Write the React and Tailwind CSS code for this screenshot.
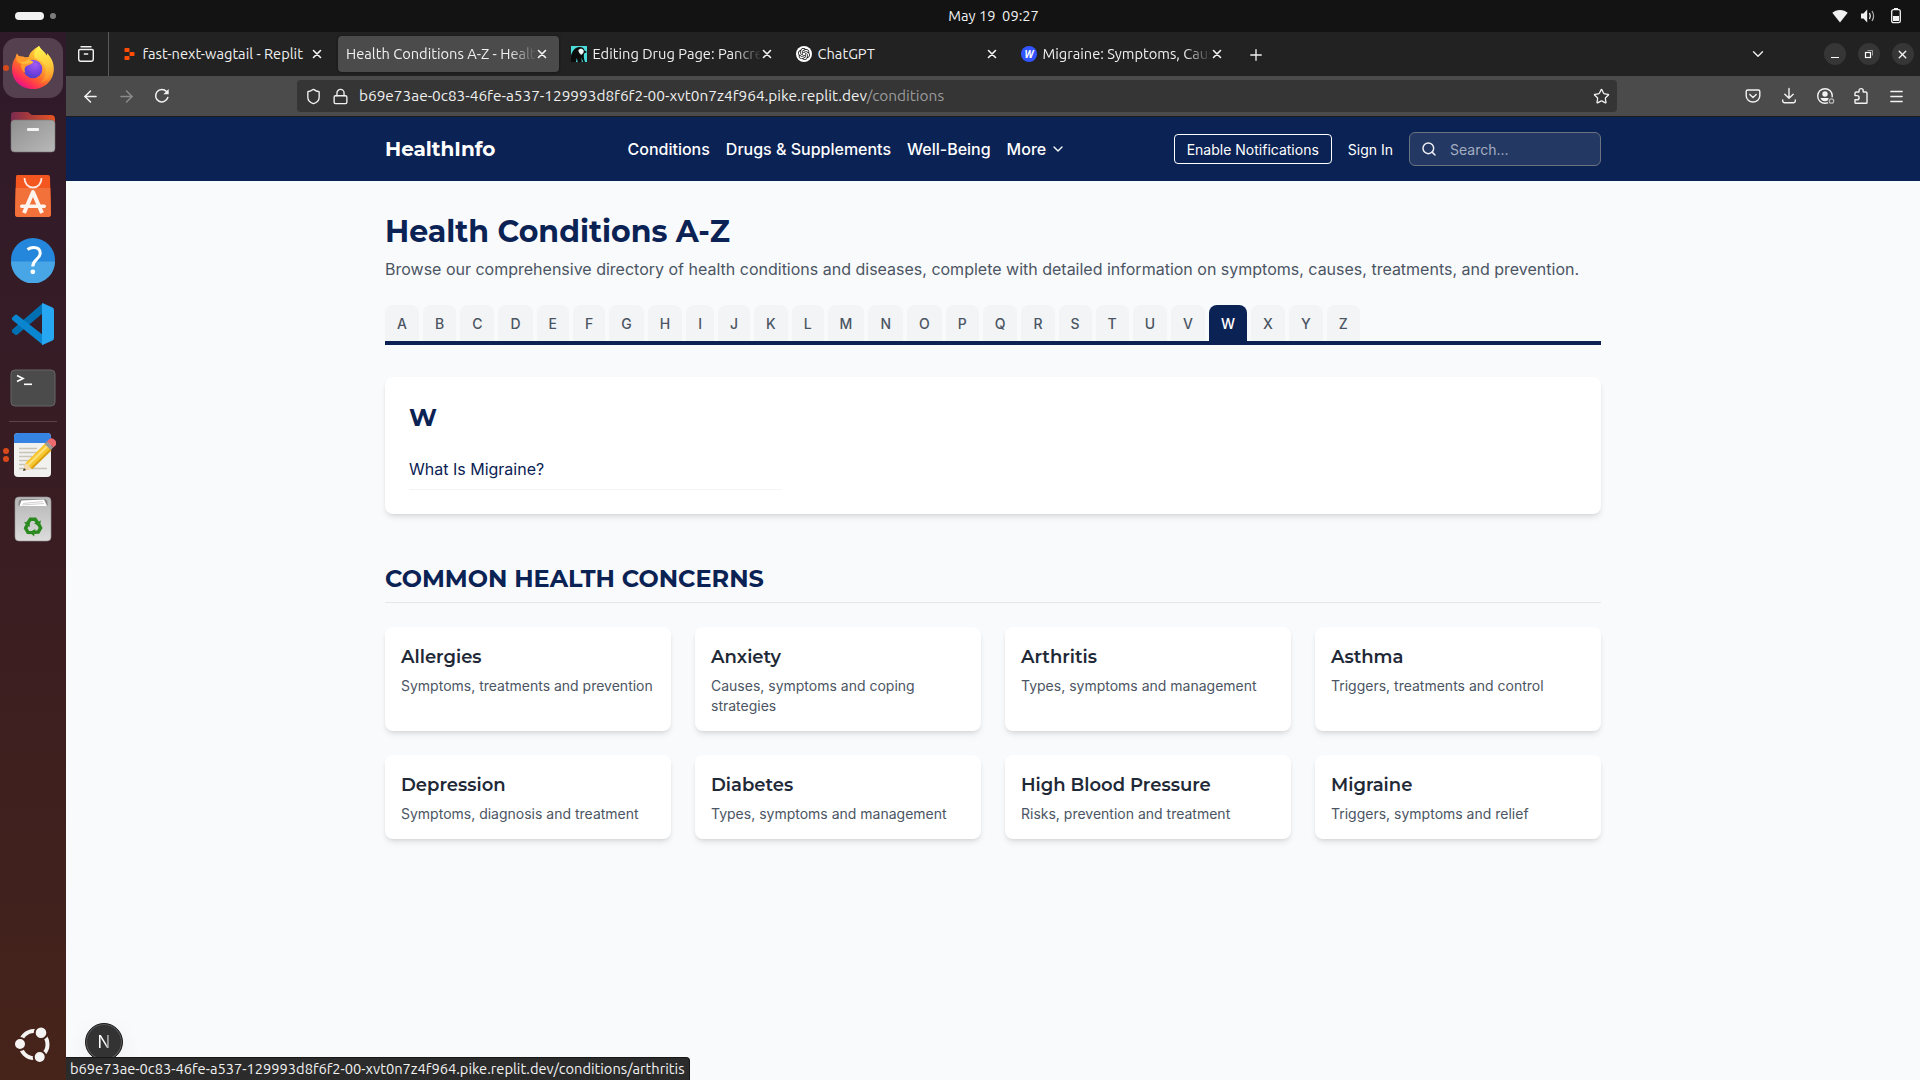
import {
  ArrowLeft,
  ArrowRight,
  Lock,
  Menu,
  Plus,
  Search,
  Shield,
  Star,
  X,
  ChevronDown,
} from "lucide-react";
import { SiOpenai } from "react-icons/si";

const UI = "font-[Ubuntu,'Noto_Sans',sans-serif]";
const HEADING = "font-[Montserrat,Inter,sans-serif]";

/* ---------- Dock icons ---------- */

function FirefoxIcon() {
  return (
    <svg width="46" height="46" viewBox="0 0 46 46" className="-mt-[3px]">
      <defs>
        <linearGradient id="ffBody" x1="0.85" y1="0.1" x2="0.25" y2="0.95">
          <stop offset="0" stopColor="#ffe64d" />
          <stop offset="0.35" stopColor="#ffb02e" />
          <stop offset="0.62" stopColor="#ff6a2b" />
          <stop offset="0.85" stopColor="#ff2f55" />
          <stop offset="1" stopColor="#e61587" />
        </linearGradient>
        <linearGradient id="ffTail" x1="0.5" y1="0" x2="0.6" y2="1">
          <stop offset="0" stopColor="#fff44f" />
          <stop offset="0.55" stopColor="#ffc83a" />
          <stop offset="1" stopColor="#ff8a2a" stopOpacity="0.6" />
        </linearGradient>
        <radialGradient id="ffGlobe" cx="0.6" cy="0.25" r="0.8">
          <stop offset="0" stopColor="#a35bf2" />
          <stop offset="0.6" stopColor="#7340e0" />
          <stop offset="1" stopColor="#4a3fc4" />
        </radialGradient>
      </defs>
      <path
        d="M29 2c2 4 6 6 8 10 .3-.9.2-1.800 0-2.700C41.500 14 44 19 43.800 25 43.500 37 34.500 45 23 45 11 45 2 36.500 2 25c0-5 1.400-8.500 3.500-11.500.1-1.300.6-2.800 1.500-4 .3 1.200 1 2.300 2 3 2.500-.5 4.500 0 6.500 1 1-.4 2.200-.6 3.200-.5C20 8 24 5 29 2z"
        fill="url(#ffBody)"
      />
      <path
        d="M29 2c2 4 6 6 8 10 .3-.9.2-1.800 0-2.700C42 15 43.500 20 42.500 26c-1.200 7.500-6 12-12.500 13 6-5 8-13 3.500-19-2-3-5.500-4-8.500-6-2-3-.5-8 4-12z"
        fill="url(#ffTail)"
      />
      <circle cx="23" cy="25" r="9.300" fill="url(#ffGlobe)" />
      <path d="M7 9.500c.5 2 3 3.200 5.500 4 3-.6 6 .5 7.500 3 1.500 1 3.500.8 3 2-1 2-4.500 2.200-6.500 3.500-2 1.500-2.500 4-1.200 7-3.500-2.500-5-6-4.300-9.500C7 19 5 15 7 9.500z" fill="#ff9a2e" />
      <path d="M10 18.500c2.800 1.800 6 1.500 9 .8 2.200-.5 3.800-.3 4-1 .4-1.300-3-1.500-4.500-3-1.700 1.700-5 3-8.500 3.200z" fill="#ffbd3f" />
    </svg>
  );
}

function FilesIcon() {
  return (
    <svg width="46" height="42" viewBox="0 0 46 42">
      <defs>
        <linearGradient id="flBack" x1="0" y1="0" x2="1" y2="0">
          <stop offset="0" stopColor="#7b2a50" />
          <stop offset="1" stopColor="#e95420" />
        </linearGradient>
        <linearGradient id="flFront" x1="0" y1="0" x2="1" y2="1">
          <stop offset="0" stopColor="#8f8f8f" />
          <stop offset="1" stopColor="#b9b9b9" />
        </linearGradient>
      </defs>
      <path d="M1 16V4q0-3 3-3h13q1.500 0 2.500 1.300T22 4h19q4 0 4 4v9z" fill="url(#flBack)" />
      <rect x="1" y="9" width="44" height="32" rx="3.500" fill="url(#flFront)" stroke="#777" strokeWidth="0.600" />
      <rect x="17" y="17" width="12" height="3" rx="1" fill="#f4f4f4" />
    </svg>
  );
}

function StoreIcon() {
  return (
    <svg width="38" height="44" viewBox="0 0 38 44">
      <path d="M3 1h31q2 0 2 2l1 37q0 3-3 3H4q-3 0-3-3L2 3q0-2 1-2z" fill="#f4561f" />
      <path d="M1.700 14h34.600l.7 26q0 3-3 3H4q-3 0-3-3z" fill="#f2703a" />
      <path d="M10.500 4c0 5.500 3.500 9.500 8.500 9.500s8.500-4 8.500-9.500" fill="none" stroke="#ffe8df" strokeWidth="1.800" />
      <path d="M10 39l9-21 9 21" fill="none" stroke="#fff3ee" strokeWidth="4" strokeLinejoin="round" />
      <rect x="6" y="30.500" width="26" height="3.500" rx="1.700" fill="#fff3ee" />
    </svg>
  );
}

function HelpIcon() {
  return (
    <svg width="46" height="46" viewBox="0 0 46 46">
      <circle cx="23" cy="23" r="22" fill="#2487db" />
      <path d="M1 24.500h44A22 22 0 0 1 1 24.500z" fill="#48a6e6" />
      <path d="M17.500 12.500c2-1.400 4-2 6-2 4 0 6.700 2 6.700 5.600 0 6.400-7.500 6.400-7.500 13.400" fill="none" stroke="#fff" strokeWidth="3" />
      <circle cx="22.800" cy="34.800" r="2.400" fill="#fff" />
    </svg>
  );
}

function CodeIcon() {
  return (
    <svg width="44" height="44" viewBox="0 0 44 44">
      <path d="M32 1v10L6.500 32.500q-1.500 1-2.800 0L1.300 30.200q-1-1.200 0-2.600z" fill="#0070b3" />
      <path d="M1.300 15.500L3.700 13.200q1.300-1.200 2.800 0L32 33v10L1.300 18q-1-1.200 0-2.500z" fill="#0a86d1" />
      <path d="M31.500 1L41.500 5.500q1.500.8 1.500 2.500v28q0 1.700-1.500 2.500L31.500 43q-1 0-.5-1.500V2.500q0-1.500.5-1.500z" fill="#27a6f2" />
    </svg>
  );
}

function TerminalIcon() {
  return (
    <svg width="46" height="38" viewBox="0 0 46 38">
      <rect x="1" y="1" width="44" height="36" rx="4" fill="#4b4b4b" stroke="#666" />
      <path d="M7 6.500l6 3-6 3" fill="none" stroke="#fff" strokeWidth="1.700" />
      <rect x="14" y="14.500" width="8" height="1.600" fill="#fff" />
    </svg>
  );
}

function NotesIcon() {
  return (
    <svg width="46" height="48" viewBox="0 0 46 48">
      <rect x="4" y="2" width="37" height="44" rx="4" fill="#f1f1f0" />
      <path d="M4 12V6q0-4 4-4h29q4 0 4 4v6z" fill="#3584e4" />
      <path d="M9 17.500h18M9 21.500h18M9 25.500h13M9 29.500h12M9 33.500h9M9 37.500h28" stroke="#c9c4b4" strokeWidth="1.700" />
      <path d="M13 40l2.500-8L35 12.500l6 6L21.500 37.500z" fill="#f6c62f" />
      <path d="M17.500 34.500L37.500 15" stroke="#fbe07c" strokeWidth="2.200" />
      <path d="M21.500 37.500L41 18.500" stroke="#dba012" strokeWidth="2" />
      <path d="M13 40l2.500-8 6 5.500z" fill="#f3d9b0" />
      <path d="M13 40l.9-3 2.300 2z" fill="#3d3846" />
      <path d="M34.500 12.800l2.500-2.500 6.300 6.200-2.600 2.500z" fill="#9a9996" />
      <path d="M37 10.300l1.800-1.800q3-2.500 6 .5t.5 5.700l-2 1.800z" fill="#ed6a6f" />
    </svg>
  );
}

function RecycleArrow() {
  return (
    <>
      <path d="M-5.500 -2.800L-2.600 -7.300H2.200L4.400 -4" />
      <path d="M1 -3.300l7-2.600-1.600 6z" fill="#2a8a1f" stroke="none" />
    </>
  );
}

function TrashIcon() {
  return (
    <svg width="38" height="46" viewBox="0 0 38 46">
      <defs>
        <linearGradient id="trBody" x1="0" y1="0" x2="0" y2="1">
          <stop offset="0" stopColor="#b5b5b5" />
          <stop offset="1" stopColor="#dcdcdc" />
        </linearGradient>
      </defs>
      <rect x="1" y="1" width="36" height="44" rx="4" fill="url(#trBody)" stroke="#999" strokeWidth="0.600" />
      <path d="M4.500 10V7q0-4 4-4h21q4 0 4 4v3z" fill="#8a8a8a" />
      <path d="M5.500 10l2-5.500L30 3.500l3 6.500z" fill="#fff" />
      <path d="M9 7.500l20-2M8 9l22-1.500" stroke="#bbb" strokeWidth="0.700" />
      <g transform="translate(19 30.500)" fill="none" stroke="#2a8a1f" strokeWidth="3.400">
        <RecycleArrow />
        <g transform="rotate(120)">
          <RecycleArrow />
        </g>
        <g transform="rotate(240)">
          <RecycleArrow />
        </g>
      </g>
    </svg>
  );
}

function UbuntuIcon() {
  return (
    <svg width="38" height="38" viewBox="0 0 38 38">
      <circle cx="20" cy="19.500" r="13.500" fill="none" stroke="#f6f4f3" strokeWidth="4" />
      <g fill="#f6f4f3" stroke="#46231a" strokeWidth="2">
        <circle cx="6" cy="19" r="6" />
        <circle cx="27" cy="7.800" r="6.300" />
        <circle cx="25.700" cy="32" r="6" />
      </g>
    </svg>
  );
}

function DockItem({ children, dots = 0, active = false }) {
  return (
    <div className="relative flex h-16 w-full shrink-0 items-center justify-center">
      {active && <div className="absolute top-0.5 left-[3px] size-[60px] rounded-[14px] bg-[#54404f]" />}
      {dots > 0 && (
        <div className="absolute top-0 left-[3px] flex h-full flex-col items-center justify-center gap-[2px]">
          {Array.from({ length: dots }, (_, i) => (
            <span key={i} className="size-[6px] rounded-full bg-[#d84a1b]" />
          ))}
        </div>
      )}
      <div className="relative">{children}</div>
    </div>
  );
}

function Dock() {
  return (
    <aside className="flex w-[66px] shrink-0 flex-col items-center bg-linear-to-b from-[#2f1a2a] via-[#3a1d22] to-[#46241a] pt-1">
      <DockItem active dots={1}><FirefoxIcon /></DockItem>
      <DockItem><FilesIcon /></DockItem>
      <DockItem><StoreIcon /></DockItem>
      <DockItem><HelpIcon /></DockItem>
      <DockItem><CodeIcon /></DockItem>
      <DockItem><TerminalIcon /></DockItem>
      <div className="flex h-[3px] shrink-0 items-center">
        <div className="h-px w-12 bg-[#5b4448]" />
      </div>
      <DockItem dots={2}><NotesIcon /></DockItem>
      <DockItem><TrashIcon /></DockItem>
      <div className="mt-auto mb-1">
        <DockItem><UbuntuIcon /></DockItem>
      </div>
    </aside>
  );
}

/* ---------- System bar ---------- */

function SystemBar() {
  return (
    <div className={`grid h-8 shrink-0 grid-cols-3 items-center bg-[#131313] text-[#f0f0f0] ${UI}`}>
      <div className="flex items-center gap-1.5 pl-[15px]">
        <span className="h-2 w-[29px] rounded-full bg-[#f2f2f2]" />
        <span className="size-[6px] rounded-full bg-[#7d7d7d]" />
      </div>
      <div className="-mt-px pl-[67px] text-center text-[14.67px] leading-5 whitespace-pre">May 19  09:27</div>
      <div className="flex items-center justify-end gap-3 pr-4">
        <svg width="16" height="16" viewBox="0 0 16 16">
          <path d="M.3 4.800C2.200 2.900 5 1.900 8 1.900s5.800 1 7.700 2.900L8 14.500z" fill="#f2f2f2" />
        </svg>
        <svg width="16" height="16" viewBox="0 0 16 16" fill="none">
          <path d="M1 5.500h2.500L7.200 1.500v13L3.500 10.500H1z" fill="#f2f2f2" />
          <path d="M9.500 5q1.600 3 0 6" stroke="#f2f2f2" strokeWidth="1.300" />
          <path d="M12 3q3.200 5 0 10" stroke="#a9a9a9" strokeWidth="1.300" />
        </svg>
        <svg width="16" height="16" viewBox="0 0 16 16" fill="none">
          <rect x="3.700" y="1.700" width="8.600" height="13" rx="1.800" stroke="#f2f2f2" strokeWidth="1.300" />
          <rect x="6" y="0" width="4" height="2" fill="#f2f2f2" />
          <rect x="5" y="8" width="6" height="5" fill="#f2f2f2" />
        </svg>
      </div>
    </div>
  );
}

/* ---------- Browser chrome ---------- */

function ReplitIcon() {
  return (
    <svg width="16" height="16" viewBox="0 0 16 16" fill="#ff4d05">
      <rect x="3.500" y="2" width="5" height="4" rx="0.800" />
      <rect x="8.500" y="6" width="5" height="4" rx="0.800" />
      <rect x="3.500" y="10" width="5" height="4" rx="0.800" />
    </svg>
  );
}

function WagtailIcon() {
  return (
    <svg width="16" height="16" viewBox="0 0 16 16">
      <rect width="16" height="16" fill="#4bdcdb" />
      <path d="M0 16V9.500C1.500 5 4 1 8.500 1c3 0 4.700 1.500 5 3.500L16 6l-3 1.500C12.500 11 13 13 14 16z" fill="#0b0b0b" />
      <path d="M7.300 4.500C8 2.300 11.500 2 12.600 4.300c.6 2.200-.6 3.700-2.600 4.700-.5-1.500-2.400-2-2.700-4.500z" fill="#eef7f7" />
      <path d="M5 16l.8-4 .9 4zM10.800 16l-.4-4.500 1.800 4.500z" fill="#4bdcdb" />
    </svg>
  );
}

function ChatIcon() {
  return (
    <span className="flex size-4 items-center justify-center rounded-full bg-white">
      <SiOpenai size={12} color="#111" />
    </span>
  );
}

function WIcon() {
  return (
    <span className="flex size-4 items-center justify-center rounded-full bg-[#3355ff] font-['Noto_Sans',sans-serif] text-[10px] leading-none font-bold text-white italic">
      W
    </span>
  );
}

const TABS = [
  { title: "fast-next-wagtail - Replit", icon: <ReplitIcon /> },
  { title: "Health Conditions A-Z - Healt", active: true, fade: true },
  { title: "Editing Drug Page: Pancre", icon: <WagtailIcon />, fade: true },
  { title: "ChatGPT", icon: <ChatIcon /> },
  { title: "Migraine: Symptoms, Caus", icon: <WIcon />, fade: true },
];

function Tab({ title, icon, active, fade }) {
  return (
    <div className="h-full w-[225px] px-0.5 py-1">
      <div
        className={
          active
            ? "flex h-full items-center rounded bg-[#4b4b4b] pr-2 pl-2 shadow-[0_0_3px_rgba(0,0,0,0.5)]"
            : "flex h-full items-center pr-2 pl-2"
        }
      >
        {icon && <span className="mr-[5.500px] shrink-0">{icon}</span>}
        <span
          className={
            fade
              ? "min-w-0 flex-1 mask-[linear-gradient(to_right,black_calc(100%-26px),transparent_calc(100%+2px))] text-[14.67px] leading-6 whitespace-nowrap"
              : "min-w-0 flex-1 text-[14.67px] leading-6 whitespace-nowrap"
          }
        >
          {title}
        </span>
        <span className="-ml-px flex w-[17px] shrink-0">
          <svg width="16" height="16" viewBox="0 0 16 16" stroke="#f4f4f4" strokeWidth="1.600" strokeLinecap="round">
            <path d="M4.500 4.500l7 7M11.500 4.500l-7 7" />
          </svg>
        </span>
      </div>
    </div>
  );
}

function WindowButton({ children }) {
  return <span className="flex size-[22px] items-center justify-center rounded-full bg-[#363636]">{children}</span>;
}

function TabStrip() {
  return (
    <div className={`flex h-11 shrink-0 items-center bg-[#222222] text-[#f0f0f0] ${UI}`}>
      <div className="flex h-full w-[43px] items-center justify-center border-r border-[#5a5a5a] pr-0.5">
        <svg width="18" height="18" viewBox="0 0 18 18" fill="none" stroke="#f2f2f2" strokeWidth="1.400" strokeLinecap="round">
          <path d="M4 1.700h10" />
          <path d="M3 4.500h12q1.300 0 1.300 1.300v8.200q0 2.300-2.300 2.300H4q-2.300 0-2.300-2.300V5.800Q1.700 4.500 3 4.500z" />
          <path d="M7.300 9h3.400" />
        </svg>
      </div>
      <div className="ml-0.5 flex h-full">
        {TABS.map((tab) => (
          <Tab key={tab.title} {...tab} />
        ))}
      </div>
      <Plus size={18} strokeWidth={1.800} className="mt-px ml-[11px]" />
      <div className="ml-auto flex items-center pr-[6.500px]">
        <ChevronDown size={18} strokeWidth={1.800} className="mr-[57px]" />
        <div className="flex gap-3">
          <WindowButton>
            <span className="mt-1.5 h-px w-2 bg-white" />
          </WindowButton>
          <WindowButton>
            <svg width="10" height="10" viewBox="0 0 10 10" fill="none" stroke="#fff">
              <rect x="1.500" y="3.500" width="5" height="5" strokeWidth="1.200" />
              <path d="M3.500 1.500h5v5" opacity="0.500" />
            </svg>
          </WindowButton>
          <WindowButton>
            <X size={13} strokeWidth={2.600} />
          </WindowButton>
        </div>
      </div>
    </div>
  );
}

function ReloadIcon() {
  return (
    <svg width="16" height="16" viewBox="0 0 16 16" fill="none">
      <path d="M13.800 9.500A6.200 6.200 0 1 1 12.500 3.600" stroke="#f2f2f2" strokeWidth="1.500" strokeLinecap="round" />
      <path d="M14.700 1v5.300H9.400z" fill="#f2f2f2" />
    </svg>
  );
}

function AddressBar() {
  return (
    <div className={`flex h-[41px] shrink-0 items-center border-b border-[#1c1c1e] bg-[#4b4b4b] text-[#f2f2f2] ${UI}`}>
      <div className="flex w-[231px] items-center gap-[17px] pl-[14.500px]">
        <ArrowLeft size={19} strokeWidth={1.900} />
        <ArrowRight size={19} strokeWidth={1.900} className="text-[#8b8b8b]" />
        <span className="ml-px">
          <ReloadIcon />
        </span>
      </div>
      <div className="flex h-8 w-[1320px] items-center rounded bg-[#353535] pr-[7.500px] pl-[7.500px]">
        <Shield size={17} strokeWidth={1.900} className="mr-[10.500px]" />
        <Lock size={17} strokeWidth={1.900} className="mr-[10px]" />
        <span className="flex-1 text-[15.4px] leading-6 text-[#efefef]">
          b69e73ae-0c83-46fe-a537-129993d8f6f2-00-xvt0n7z4f964.pike.replit.dev
          <span className="text-[#9b9b9b]">/conditions</span>
        </span>
        <Star size={17} strokeWidth={1.800} />
      </div>
      <div className="ml-auto flex items-center pr-[15px]">
        <svg width="18" height="18" viewBox="0 0 18 18" fill="none" stroke="#f2f2f2" strokeWidth="1.400" strokeLinecap="round" strokeLinejoin="round">
          <path d="M3.700 3h10.600q1.500 0 1.500 1.500v4.200a6.800 6.300 0 0 1-13.600 0V4.500Q2.200 3 3.700 3z" />
          <path d="M5.800 7.500L9 10.500l3.200-3" />
        </svg>
        <svg className="ml-[18px]" width="18" height="18" viewBox="0 0 18 18" fill="none" stroke="#f2f2f2" strokeWidth="1.400" strokeLinecap="round" strokeLinejoin="round">
          <path d="M9 1.500v9.800M4.800 7.300L9 11.300l4.200-4" />
          <path d="M2.700 13v1q0 1.700 1.700 1.700h9.200q1.700 0 1.700-1.700v-1" />
        </svg>
        <svg className="ml-[18px]" width="20" height="18" viewBox="0 0 20 18" fill="none">
          <circle cx="9" cy="9" r="7.300" stroke="#f2f2f2" strokeWidth="1.400" />
          <circle cx="9" cy="7" r="2.700" fill="#f2f2f2" />
          <path d="M4.500 11h9q-1.300 3.300-4.500 3.300T4.500 11z" fill="#f2f2f2" />
          <circle cx="15.500" cy="14" r="3.700" fill="#4b4b4b" />
          <circle cx="15.500" cy="14" r="2.200" stroke="#b5b5b5" strokeWidth="1.300" />
        </svg>
        <svg className="ml-4" width="18" height="18" viewBox="0 0 18 18" fill="none" stroke="#f2f2f2" strokeWidth="1.400" strokeLinejoin="round">
          <path d="M3 8V6.300Q3 5 4.300 5H7V3.700a2.100 2.100 0 0 1 4.200 0V5h2.500Q15 5 15 6.300v9.200q0 .8-.8.8H3.800q-.8 0-.8-.8v-2.700h2a2 2 0 0 0 0-4.200H3z" />
        </svg>
        <Menu size={17} strokeWidth={1.900} className="ml-[18px]" />
      </div>
    </div>
  );
}

/* ---------- Web page ---------- */

function SiteHeader() {
  return (
    <header className="flex h-16 shrink-0 justify-center bg-[#0b2254] text-white">
      <div className="flex w-[1216px] items-center">
        <span className={`w-[110px] text-xl font-bold ${HEADING}`}>HealthInfo</span>
        <nav className="ml-[132.500px] flex gap-4 font-medium">
          <span>Conditions</span>
          <span>Drugs &amp; Supplements</span>
          <span>Well-Being</span>
          <span className="flex items-center gap-1">
            More
            <ChevronDown size={16} strokeWidth={2} />
          </span>
        </nav>
        <div className="ml-auto flex items-center gap-4 text-sm">
          <span className="flex h-[30px] items-center rounded border border-white px-3 pt-0.5">
            Enable Notifications
          </span>
          <span className="pt-0.5">Sign In</span>
          <div className="flex h-[34px] w-48 items-center rounded-md border border-[#6b7280] bg-[#233863] pl-[11px]">
            <Search size={16} strokeWidth={2.200} className="text-[#eef0f4]" />
            <span className="ml-[13px] pt-0.5 text-[#a3adc0]">Search...</span>
          </div>
        </div>
      </div>
    </header>
  );
}

const LETTERS = "ABCDEFGHIJKLMNOPQRSTUVWXYZ".split("");

const CONCERNS = [
  ["Allergies", "Symptoms, treatments and prevention"],
  ["Anxiety", "Causes, symptoms and coping strategies"],
  ["Arthritis", "Types, symptoms and management"],
  ["Asthma", "Triggers, treatments and control"],
  ["Depression", "Symptoms, diagnosis and treatment"],
  ["Diabetes", "Types, symptoms and management"],
  ["High Blood Pressure", "Risks, prevention and treatment"],
  ["Migraine", "Triggers, symptoms and relief"],
];

function Page() {
  return (
    <div className="relative flex min-h-0 flex-1 flex-col bg-[#f9fafc] font-[Inter,sans-serif]">
      <SiteHeader />
      <main className="mx-auto w-[1216px] pt-[33px]">
        <h1 className={`mb-[7px] text-3xl leading-9 font-bold text-[#0b2254] ${HEADING}`}>Health Conditions A-Z</h1>
        <p className="mb-6 text-[#4b5563]">
          Browse our comprehensive directory of health conditions and diseases, complete with detailed information on
          symptoms, causes, treatments, and prevention.
        </p>
        <div className="mb-8 flex gap-1 border-b-4 border-[#0b2254] text-sm font-medium">
          {LETTERS.map((letter) => (
            <span
              key={letter}
              className={
                letter === "W"
                  ? "rounded-t-lg bg-[#0b2254] px-3 pt-[9px] pb-[7px] text-white"
                  : "rounded-t-lg bg-[#f3f4f6] px-3 pt-[9px] pb-[7px] text-[#4b5563]"
              }
            >
              {letter}
            </span>
          ))}
        </div>
        <section className="rounded-lg bg-white px-6 pt-[25px] pb-6 shadow-md">
          <h2 className={`mb-[15px] text-2xl font-bold text-[#0b2254] ${HEADING}`}>W</h2>
          <div className="grid grid-cols-3 gap-6">
            <div className="border-b border-[#f3f4f6] py-2 text-[#0b2254]">What Is Migraine?</div>
          </div>
        </section>
        <section className="mt-[49px]">
          <h2 className={`mb-6 border-b border-[#e5e7eb] pb-[7px] text-2xl font-bold text-[#0b2254] ${HEADING}`}>
            COMMON HEALTH CONCERNS
          </h2>
          <div className="grid grid-cols-4 gap-6">
            {CONCERNS.map(([title, text]) => (
              <div key={title} className="rounded-lg bg-white px-4 pt-4 pb-[15px] shadow-md">
                <h3 className={`text-lg leading-7 font-semibold text-[#1f2937] ${HEADING}`}>{title}</h3>
                <p className="mt-[5px] text-sm text-[#4b5563]">{text}</p>
              </div>
            ))}
          </div>
        </section>
      </main>
      <div className="absolute bottom-[19px] left-[19px] flex size-[38px] items-center justify-center rounded-full border border-[#1a1a1a] bg-[#333333] shadow-[inset_0_0_0_1px_#5c5c5c,0_8px_24px_rgba(0,0,0,0.06)]">
        <span className="bg-linear-to-r from-white from-60% to-[#777777] bg-clip-text text-[17px] leading-none text-transparent">
          N
        </span>
      </div>
      <div
        className={`absolute bottom-0 left-0 flex h-[23px] w-[624px] items-center rounded-tr border-t border-r border-[#18181a] bg-[#2b2b2b] pl-[4px] text-[14.67px] leading-5 whitespace-nowrap text-[#f2f2f2] ${UI}`}
      >
        b69e73ae-0c83-46fe-a537-129993d8f6f2-00-xvt0n7z4f964.pike.replit.dev/conditions/arthritis
      </div>
    </div>
  );
}

export default function App() {
  return (
    <div className="flex h-[1080px] w-[1920px] flex-col overflow-hidden bg-[#131313]">
      <SystemBar />
      <div className="flex min-h-0 flex-1">
        <Dock />
        <div className="flex min-w-0 flex-1 flex-col">
          <TabStrip />
          <AddressBar />
          <Page />
        </div>
      </div>
    </div>
  );
}
